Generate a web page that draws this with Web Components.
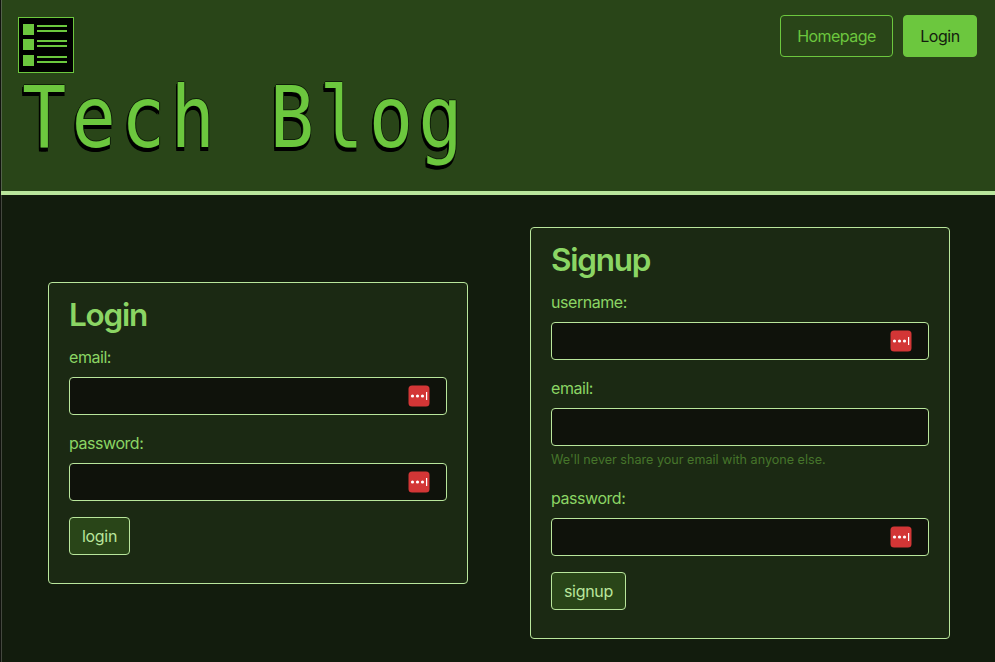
<!DOCTYPE html>
<html lang="en">
<head>
<meta charset="utf-8">
<title>Tech Blog</title>
<style>
html,body{margin:0;height:100%;overflow:hidden;background:#121c0d}
body{font:400 16px/24px Inter,"Liberation Sans",sans-serif;
--green:#6cc73e;--light:#b9e69c;--mid:#8bd564;--dark:#294518}
</style>
</head>
<body>
<blog-page>
  <site-header slot="header">
    <nav-button slot="nav" style="width:113px;letter-spacing:-.55px">Homepage</nav-button>
    <nav-button slot="nav" solid style="width:74px;letter-spacing:-.45px">Login</nav-button>
  </site-header>
  <form-card heading="Login" style="height:302px">
    <form-field label="email:" manager></form-field>
    <form-field label="password:" manager></form-field>
    <submit-button style="width:61px">login</submit-button>
  </form-card>
  <form-card heading="Signup" style="height:412px">
    <form-field label="username:" manager></form-field>
    <form-field label="email:">We'll never share your email with anyone else.</form-field>
    <form-field label="password:" manager></form-field>
    <submit-button style="width:75px">signup</submit-button>
  </form-card>
</blog-page>
<script>
class Base extends HTMLElement {
  connectedCallback() {
    if (!this.shadowRoot) this.attachShadow({mode: 'open'}).innerHTML = this.view();
  }
}
customElements.define('blog-page', class extends Base {
  view() { return `<style>
    :host{display:flex;flex-direction:column;box-sizing:border-box;height:662px;border-left:1px solid #10120d}
    main{flex:1;display:flex;justify-content:space-between;align-items:center;padding:9px 45px 0 47px;box-shadow:inset 1px 0 #44483f}
    </style><slot name="header"></slot><main><slot></slot></main>`; }
});
customElements.define('site-header', class extends Base {
  view() {
    const row = y => `<path d="M5 ${y}h11v11H5zM19 ${y+1}h30v2H19zM19 ${y+6}h30v2H19z"/>`;
    return `<style>
    :host{display:flex;justify-content:space-between;align-items:flex-start;box-sizing:border-box;height:195px;background:var(--dark);border-bottom:4px solid var(--light);padding:15px 18px 0 17px;box-shadow:inset 1px 0 #53624a}
    .brand{display:flex;flex-direction:column;padding-top:2px}
    svg{display:block}
    h1{margin:0;padding-left:5px;font:400 86px/88px "DejaVu Sans Mono",monospace;letter-spacing:6.5px;white-space:pre;color:var(--green);transform:scaleX(.85);transform-origin:0 0;
      text-shadow:-1px 0 #10200a,1px 0 #10200a,0 -1px #10200a,-2px 2px #000,-2px 4px #000,0 4px #000}
    nav{display:flex;gap:10px}
    </style>
    <div class="brand"><svg width="56" height="56" fill="#6cc73e"><rect x=".5" y=".5" width="55" height="55" fill="#000" stroke="#6cc73e"/>${row(7)}${row(22)}${row(38)}</svg>
    <h1>Tech Blog</h1></div><nav><slot name="nav"></slot></nav>`; }
});
customElements.define('nav-button', class extends Base {
  view() { return `<style>
    :host{display:flex;align-items:center;justify-content:center;box-sizing:border-box;height:42px;border:1px solid var(--green);border-radius:4px;color:var(--green)}
    :host([solid]){background:var(--green);color:#131c0e}
    </style><slot></slot>`; }
});
customElements.define('form-card', class extends Base {
  view() { return `<style>
    :host{display:block;box-sizing:border-box;width:420px;border:1px solid var(--light);border-radius:4px;background:#1b2913;padding:13px 20px 12px}
    h2{margin:0 0 11px;font-size:31.5px;line-height:38px;font-weight:560;letter-spacing:-1.25px;color:var(--mid)}
    </style><h2>${this.getAttribute('heading')}</h2><slot></slot>`; }
});
customElements.define('form-field', class extends Base {
  view() {
    const badge = this.hasAttribute('manager') ? `<svg width="22" height="22"><rect x=".5" y=".5" width="21" height="21" rx="3.5" fill="#d33636"/><g fill="#fff"><circle cx="4.5" cy="11" r="1.6"/><circle cx="9.5" cy="11" r="1.6"/><circle cx="14.5" cy="11" r="1.6"/><rect x="18" y="7" width="1.2" height="8"/></g></svg>` : '';
    const note = this.textContent.trim() ? '<small><slot></slot></small>' : '';
    return `<style>
    :host{display:block;margin-bottom:16px;color:var(--mid)}
    label{display:block;margin-bottom:8px;letter-spacing:-.45px}
    .input{display:flex;align-items:center;justify-content:flex-end;box-sizing:border-box;height:38px;border:1px solid var(--light);border-radius:4px;background:#0f120b;padding-right:16px}
    small{display:block;margin:4px 0 16px;font-size:12.6px;line-height:20px;letter-spacing:0;color:#46752b}
    </style><label>${this.getAttribute('label')}</label><div class="input">${badge}</div>${note}`; }
});
customElements.define('submit-button', class extends Base {
  view() { return `<style>
    :host{display:flex;align-items:center;justify-content:center;box-sizing:border-box;height:38px;border:1px solid var(--light);border-radius:4px;background:var(--dark);color:var(--light);letter-spacing:-.3px}
    </style><slot></slot>`; }
});
</script>
</body>
</html>
